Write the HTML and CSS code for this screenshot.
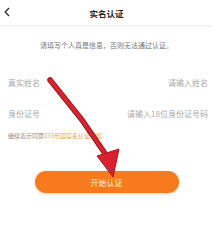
FILE: index.html
```html
<!DOCTYPE html>
<html lang="zh">

<head>
	<meta charset="UTF-8">
	<meta name="viewport" content="width=device-width, initial-scale=1.0">
	<title>实名认证</title>
	<link rel="stylesheet" href="styles.css">
</head>

<body>
	<div class="page">
		<header class="top-bar">
			<span class="back">
				<svg width="6" height="10" viewBox="0 0 6 10"><path d="M5 1 L1.2 5 L5 9" fill="none" stroke="#333" stroke-width="1.4"/></svg>
			</span>
			<h1 class="top-title">实名认证</h1>
		</header>

		<p class="notice">请填写个人真是信息，否则无法通过认证。</p>

		<div class="form">
			<div class="form-row">
				<span class="label">真实姓名</span>
				<span class="placeholder">请输入姓名</span>
			</div>
			<div class="form-row">
				<span class="label">身份证号</span>
				<span class="placeholder">请输入18位身份证号码</span>
			</div>
		</div>

		<p class="agree">继续表示同意<span class="agree-link">233乐园实名认证须知</span></p>

		<div class="button-wrap">
			<button class="start-button">开始认证</button>
		</div>

		<!-- red arrow drawn over the screenshot -->
		<svg class="arrow" width="213" height="233" viewBox="0 0 213 233">
			<path d="M50 80 L82 120 L104 152" fill="none" stroke="#8e1218" stroke-width="5.5" stroke-linecap="round" stroke-linejoin="round"/>
			<path d="M50 80 L82 120 L104 152" fill="none" stroke="#d9222e" stroke-width="3.8" stroke-linecap="round" stroke-linejoin="round"/>
			<polygon points="97,156 119,149 113,177" fill="#d9222e" stroke="#a8161f" stroke-width="1" stroke-linejoin="round"/>
		</svg>
	</div>
</body>

</html>
```

FILE: styles.css
```css
* {
	margin: 0;
	padding: 0;
	box-sizing: border-box;
}

body {
	background: #fff;
	font-family: "Noto Sans CJK SC", "Noto Sans", sans-serif;
}

.page {
	position: relative;
	width: 213px;
	height: 233px;
	overflow: hidden;
}

.top-bar {
	position: relative;
	height: 25px;
	display: flex;
	align-items: center;
	justify-content: center;
	box-shadow: 0 2px 3px rgba(0, 0, 0, 0.05);
}

.back {
	position: absolute;
	left: 4px;
	top: 7px;
	display: flex;
}

.top-title {
	font-size: 8.5px;
	font-weight: 700;
	color: #222;
}

.notice {
	margin-top: 15px;
	text-align: center;
	font-size: 7px;
	line-height: 10px;
	color: #777;
}

.form {
	margin-top: 17px;
	padding: 0 5px 0 8px;
}

.form-row {
	height: 31px;
	display: flex;
	justify-content: space-between;
	align-items: center;
	font-size: 8px;
	color: #aaa;
}

.agree {
	margin-top: 2px;
	padding-left: 8px;
	font-size: 6px;
	line-height: 10px;
	color: #888;
}

.agree-link {
	color: #e8a23c;
}

.button-wrap {
	margin-top: 30px;
	display: flex;
	justify-content: center;
}

.start-button {
	width: 144px;
	height: 22px;
	border: none;
	border-radius: 11px;
	background: #f77a1e;
	color: #fff6dc;
	font-family: inherit;
	font-size: 8px;
	box-shadow: 0 1px 3px rgba(247, 122, 30, 0.35);
}

.arrow {
	position: absolute;
	left: 0;
	top: 0;
	pointer-events: none;
}
```
